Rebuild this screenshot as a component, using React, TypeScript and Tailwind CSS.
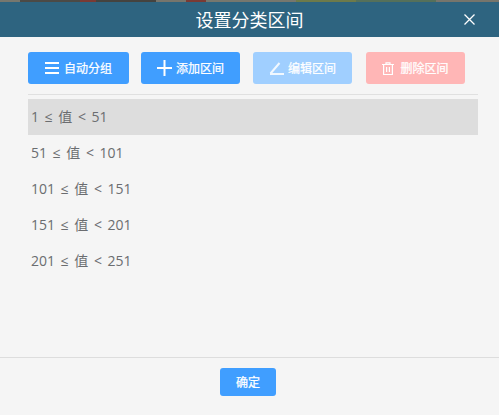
import React from "react";

function ListIcon() {
  return (
    <svg width="14" height="12" viewBox="0 0 14 12" fill="none" stroke="#fff" strokeWidth="2">
      <path d="M0 1h14M0 6h14M0 11h14" />
    </svg>
  );
}
function PlusIcon() {
  return (
    <svg width="15" height="16" viewBox="0 0 15 16" fill="none" stroke="#fff" strokeWidth="2">
      <path d="M0 8h15M7.5 0v16" />
    </svg>
  );
}
function EditIcon() {
  return (
    <svg width="15" height="13" viewBox="0 0 15 13" fill="none" stroke="#fff" strokeOpacity="0.85" strokeWidth="2">
      <path d="M1 12h14M1.5 11.5L10.5 1" />
    </svg>
  );
}
function TrashIcon() {
  return (
    <svg width="12" height="13" viewBox="0 0 12 13" fill="none" stroke="#fff" strokeWidth="1.2">
      <path d="M0 2.5h12M4 2.5V.8h4v1.7M1.6 2.5v10h8.8v-10M4.6 5v5M7.4 5v5" />
    </svg>
  );
}

function Btn({ icon, label, className }: { icon: React.ReactNode; label: string; className: string }) {
  return (
    <button className={`flex h-8 items-center justify-center rounded-[3px] text-[12px] text-white [-webkit-text-stroke:0.25px_white] ${className}`}>
      {icon}
      <span>{label}</span>
    </button>
  );
}

const rows = ["1 ≤ 值 < 51", "51 ≤ 值 < 101", "101 ≤ 值 < 151", "151 ≤ 值 < 201", "201 ≤ 值 < 251"];

const strip = [
  ["w-[20px]", "bg-[#77776e]"],
  ["w-[60px]", "bg-[#4c4a46]"],
  ["w-[16px]", "bg-[#7a3a34]"],
  ["w-[60px]", "bg-[#45433f]"],
  ["w-[30px]", "bg-[#77756c]"],
  ["w-[20px]", "bg-[#7a3a34]"],
  ["w-[90px]", "bg-[#77776e]"],
  ["w-[60px]", "bg-[#6d7a4a]"],
  ["w-[80px]", "bg-[#55705a]"],
  ["flex-1", "bg-[#77756c]"],
];

export default function App() {
  return (
    <div className="flex h-[415px] w-[499px] flex-col overflow-hidden bg-[#f5f5f5] font-['Noto_Sans_CJK_SC','Noto_Sans',sans-serif]">
      <div className="flex h-[2px]">
        {strip.map(([w, c], i) => (
          <div key={i} className={`${w} ${c}`} />
        ))}
      </div>
      <header className="relative flex h-[35px] items-center justify-center bg-[#2e6480] text-[18px] text-white">
        设置分类区间
        <svg className="absolute right-[24px] top-[12px]" width="11" height="11" viewBox="0 0 11 11" fill="none" stroke="#fff" strokeWidth="1.3">
          <path d="M.5.5l10 10M10.5.5l-10 10" />
        </svg>
      </header>
      <div className="flex flex-1 flex-col px-[28px] pt-[15px]">
        <div className="flex">
          <Btn className="w-[101px] gap-[5px] bg-[#409eff]" icon={<ListIcon />} label="自动分组" />
          <Btn className="ml-[12px] w-[99px] gap-[4px] bg-[#409eff]" icon={<PlusIcon />} label="添加区间" />
          <Btn className="ml-[13px] w-[99px] gap-[4px] bg-[#a0cfff]" icon={<EditIcon />} label="编辑区间" />
          <Btn className="ml-[14px] w-[99px] gap-[6px] bg-[#ffb6b6]" icon={<TrashIcon />} label="删除区间" />
        </div>
        <div className="mt-[10px] h-px w-[450px] bg-[#e0e0e0]" />
        <ul className="mt-[4px] w-[450px]">
          {rows.map((r, i) => (
            <li key={r} className={`flex h-9 items-center whitespace-pre pb-[2px] pl-[3px] font-['Open_Sans','Noto_Sans_CJK_SC',sans-serif] text-[14px] text-[#6b6d70] [word-spacing:2px] ${i === 0 ? "bg-[#dddddd]" : ""}`}>
              {r}
            </li>
          ))}
        </ul>
      </div>
      <footer className="flex h-[58px] items-start justify-center border-t border-[#dddddd] pr-[3px] pt-[10px]">
        <button className="flex h-7 w-14 items-center justify-center rounded-[3px] bg-[#409eff] text-[12px] text-white [-webkit-text-stroke:0.25px_white]">确定</button>
      </footer>
    </div>
  );
}
